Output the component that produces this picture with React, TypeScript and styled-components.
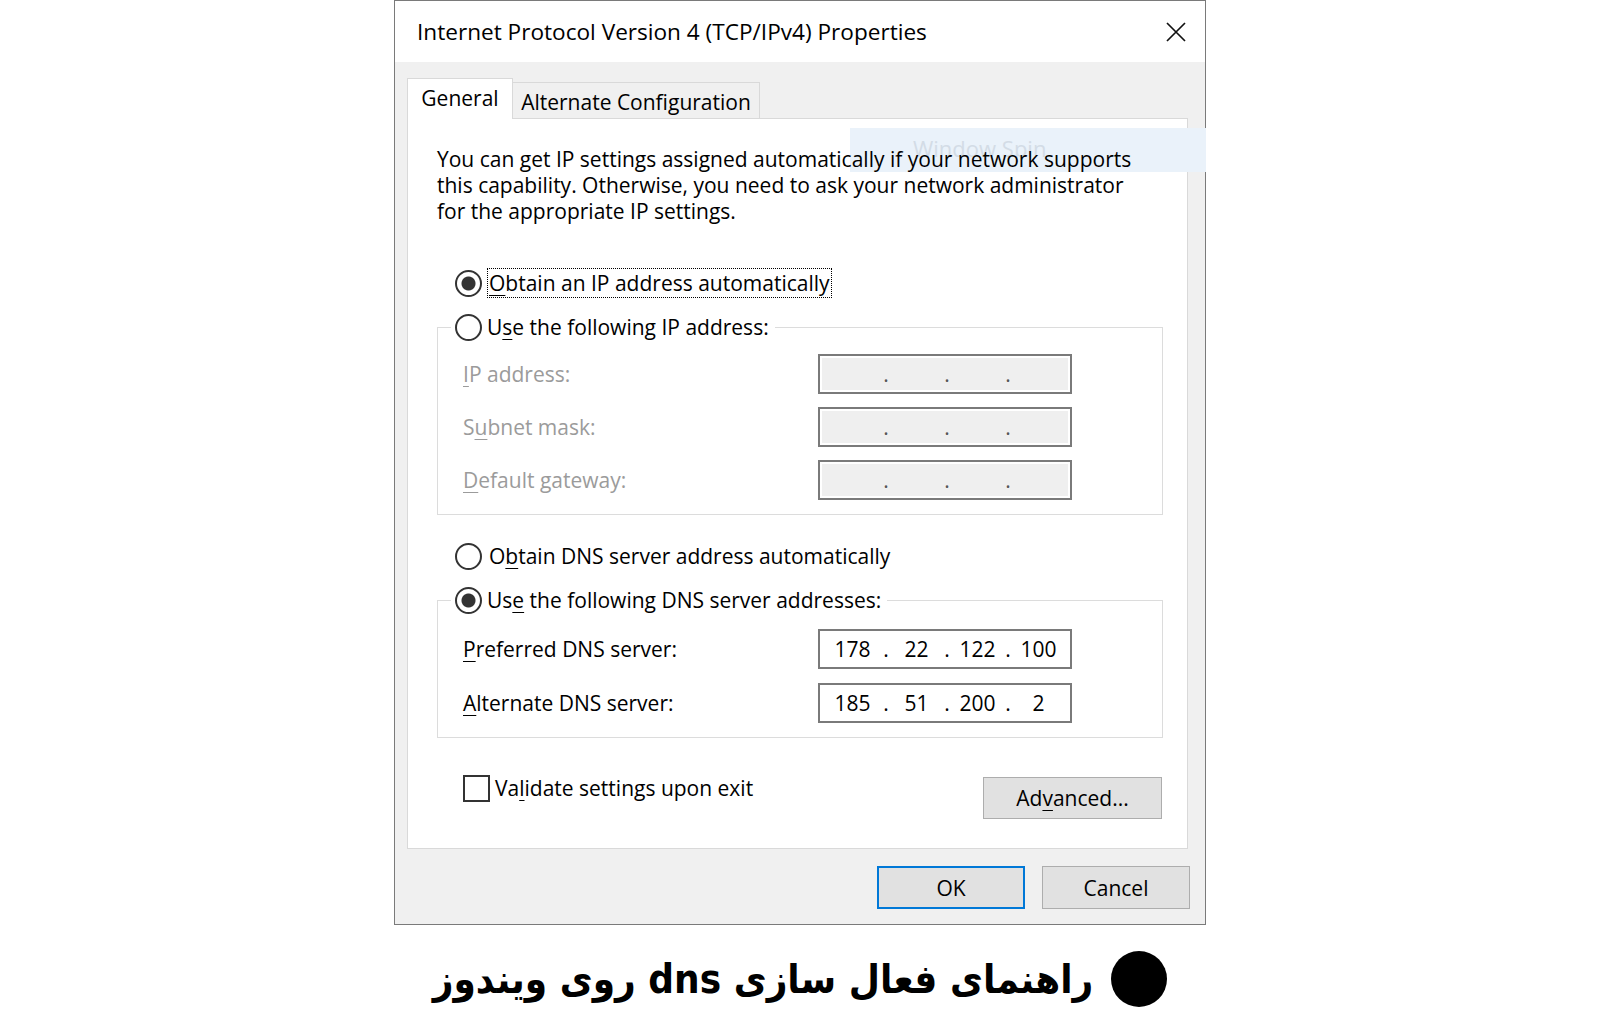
import React from 'react';
import styled, { createGlobalStyle } from 'styled-components';

const GlobalStyle = createGlobalStyle`
  html, body {
    margin: 0;
    padding: 0;
    background: #fff;
  }
  body {
    font-family: "Open Sans", "Noto Sans", sans-serif;
    color: #000;
  }
  * {
    box-sizing: border-box;
  }
`;

const Page = styled.div`
  width: 1600px;
  height: 1035px;
  display: flex;
  flex-direction: column;
  align-items: center;
  overflow: hidden;
`;

const Dialog = styled.div`
  width: 812px;
  border: 1px solid #7a7a7a;
  background: #f0f0f0;
  display: flex;
  flex-direction: column;
`;

const TitleBar = styled.div`
  height: 61px;
  background: #fff;
  display: flex;
  align-items: center;
  justify-content: space-between;
  padding: 0 19px 0 22px;
`;

const Title = styled.div`
  font-size: 22.6px;
  line-height: 30px;
`;

const CloseButton = styled.div`
  width: 20px;
  height: 20px;
  display: flex;
`;

const Body = styled.div`
  padding: 16px 17px 15px 12px;
  display: flex;
  flex-direction: column;
`;

const TabStrip = styled.div`
  display: flex;
  align-items: flex-end;
  height: 40px;
`;

const Tab = styled.div<{ $active?: boolean; $width: number }>`
  position: relative;
  z-index: ${(p) => (p.$active ? 1 : 0)};
  width: ${(p) => p.$width}px;
  height: ${(p) => (p.$active ? 41 : 36)}px;
  margin-bottom: ${(p) => (p.$active ? -1 : 0)}px;
  padding-top: 4px;
  background: ${(p) => (p.$active ? '#fff' : '#f0f0f0')};
  border: 1px solid #d9d9d9;
  border-bottom: none;
  ${(p) => (!p.$active ? 'border-left: none;' : '')}
  text-align: center;
  font-size: 21px;
  line-height: 30px;
  white-space: nowrap;
`;

const Panel = styled.div`
  position: relative;
  background: #fff;
  border: 1px solid #d9d9d9;
  padding: 27px 24px 29px 29px;
  display: flex;
  flex-direction: column;
`;

const Watermark = styled.div`
  position: absolute;
  left: 442px;
  top: 9px;
  width: 356px;
  height: 44px;
  background: #eaf2fa;
  color: #d3dce6;
  font-size: 22px;
  line-height: 40px;
  padding-left: 63px;
  pointer-events: none;
`;

const Description = styled.p`
  position: relative;
  z-index: 1;
  margin: 0 0 44px;
  font-size: 21px;
  line-height: 26px;
`;

const OptionRow = styled.div<{ $top?: number }>`
  display: flex;
  align-items: center;
  height: 30px;
  gap: 5px;
  padding-left: 18px;
  margin-top: ${(p) => p.$top ?? 0}px;
  margin-bottom: 14px;
  font-size: 21px;
`;

const Radio = styled.span<{ $checked?: boolean }>`
  flex: none;
  width: 27px;
  height: 27px;
  border-radius: 50%;
  border: 2px solid #333;
  background: ${(p) =>
    p.$checked ? 'radial-gradient(circle, #333 0 6.5px, #fff 7.5px)' : '#fff'};
`;

const Checkbox = styled.span`
  flex: none;
  width: 27px;
  height: 27px;
  border: 2px solid #333;
  background: #fff;
`;

const Label = styled.span<{ $focused?: boolean }>`
  line-height: 28px;
  padding: 0 1px;
  white-space: nowrap;
  border: 1px ${(p) => (p.$focused ? 'dotted #000' : 'solid transparent')};
`;

const Key = styled.span`
  text-decoration: underline;
  text-underline-offset: 4px;
  text-decoration-thickness: 1px;
`;

const Group = styled.fieldset`
  margin: 0;
  padding: 0;
  min-width: 0;
  border: 1px solid #dcdcdc;
`;

const Legend = styled.legend`
  margin-left: 13px;
  padding: 0 6px 0 4px;
`;

const LegendInner = styled.span`
  display: flex;
  align-items: center;
  gap: 5px;
  height: 30px;
  font-size: 21px;
`;

const FieldGrid = styled.div<{ $top: number; $gap: number }>`
  display: grid;
  grid-template-columns: 355px 254px;
  row-gap: ${(p) => p.$gap}px;
  align-items: center;
  padding: ${(p) => p.$top}px 0 14px 25px;
`;

const FieldLabel = styled.span<{ $disabled?: boolean }>`
  font-size: 21px;
  color: ${(p) => (p.$disabled ? '#9b9b9b' : '#000')};
  white-space: nowrap;
`;

const IpBox = styled.div<{ $disabled?: boolean }>`
  width: 254px;
  height: 40px;
  border: 2px solid #7a7a7a;
  background: ${(p) => (p.$disabled ? '#efefef' : '#fff')};
  box-shadow: ${(p) => (p.$disabled ? 'inset 0 0 0 2px #fff' : 'none')};
  display: grid;
  grid-template-columns: 61px 6px 55px 6px 55px 6px 55px;
  align-items: center;
  padding-left: 2px;
  font-size: 21px;
  line-height: 30px;
`;

const Octet = styled.span`
  text-align: center;
`;

const Sep = styled.span<{ $disabled?: boolean }>`
  text-align: center;
  color: ${(p) => (p.$disabled ? '#555' : '#000')};
`;

const Footer = styled.div`
  display: flex;
  justify-content: space-between;
  align-items: flex-start;
  margin-top: 35px;
  padding: 0 1px 0 26px;
`;

const CheckRow = styled.div`
  display: flex;
  align-items: center;
  gap: 5px;
  height: 30px;
  font-size: 21px;
`;

const PushButton = styled.div<{ $width: number; $height: number; $primary?: boolean }>`
  width: ${(p) => p.$width}px;
  height: ${(p) => p.$height}px;
  background: #e1e1e1;
  border: ${(p) => (p.$primary ? '2px solid #0078d7' : '1px solid #adadad')};
  display: flex;
  align-items: center;
  justify-content: center;
  font-size: 21px;
`;

const AdvancedWrap = styled.div`
  margin-top: 4px;
`;

const ButtonRow = styled.div`
  display: flex;
  justify-content: flex-end;
  gap: 17px;
  margin: 17px -2px 0 0;
`;

const Caption = styled.div`
  display: flex;
  direction: rtl;
  align-items: center;
  gap: 18px;
  margin-top: 24px;
`;

const CaptionDot = styled.span`
  flex: none;
  width: 56px;
  height: 56px;
  border-radius: 50%;
  background: #000;
`;

const CaptionText = styled.span`
  font-family: "DejaVu Sans Condensed", "DejaVu Sans", sans-serif;
  font-stretch: condensed;
  font-weight: 700;
  font-size: 40px;
  line-height: 60px;
  color: #000;
  white-space: nowrap;
`;

const IpField: React.FC<{ parts?: string[]; disabled?: boolean }> = ({ parts = ['', '', '', ''], disabled }) => (
  <IpBox $disabled={disabled}>
    <Octet>{parts[0]}</Octet>
    <Sep $disabled={disabled}>.</Sep>
    <Octet>{parts[1]}</Octet>
    <Sep $disabled={disabled}>.</Sep>
    <Octet>{parts[2]}</Octet>
    <Sep $disabled={disabled}>.</Sep>
    <Octet>{parts[3]}</Octet>
  </IpBox>
);

const CloseIcon = () => (
  <svg width="20" height="20" viewBox="0 0 20 20">
    <path d="M1 1L19 19M19 1L1 19" stroke="#111" strokeWidth="1.7" fill="none" />
  </svg>
);

export default function App() {
  return (
    <Page>
      <GlobalStyle />
      <Dialog>
        <TitleBar>
          <Title>Internet Protocol Version 4 (TCP/IPv4) Properties</Title>
          <CloseButton>
            <CloseIcon />
          </CloseButton>
        </TitleBar>
        <Body>
          <TabStrip>
            <Tab $active $width={106}>General</Tab>
            <Tab $width={247}>Alternate Configuration</Tab>
          </TabStrip>
          <Panel>
            <Watermark>Window Spin</Watermark>
            <Description>
              You can get IP settings assigned automatically if your network supports
              <br />
              this capability. Otherwise, you need to ask your network administrator
              <br />
              for the appropriate IP settings.
            </Description>

            <OptionRow>
              <Radio $checked />
              <Label $focused>
                <Key>O</Key>btain an IP address automatically
              </Label>
            </OptionRow>

            <Group>
              <Legend>
                <LegendInner>
                  <Radio />
                  <span>
                    U<Key>s</Key>e the following IP address:
                  </span>
                </LegendInner>
              </Legend>
              <FieldGrid $top={12} $gap={13}>
                <FieldLabel $disabled>
                  <Key>I</Key>P address:
                </FieldLabel>
                <IpField disabled />
                <FieldLabel $disabled>
                  S<Key>u</Key>bnet mask:
                </FieldLabel>
                <IpField disabled />
                <FieldLabel $disabled>
                  <Key>D</Key>efault gateway:
                </FieldLabel>
                <IpField disabled />
              </FieldGrid>
            </Group>

            <OptionRow $top={26}>
              <Radio />
              <Label>
                O<Key>b</Key>tain DNS server address automatically
              </Label>
            </OptionRow>

            <Group>
              <Legend>
                <LegendInner>
                  <Radio $checked />
                  <span>
                    Us<Key>e</Key> the following DNS server addresses:
                  </span>
                </LegendInner>
              </Legend>
              <FieldGrid $top={14} $gap={14}>
                <FieldLabel>
                  <Key>P</Key>referred DNS server:
                </FieldLabel>
                <IpField parts={['178', '22', '122', '100']} />
                <FieldLabel>
                  <Key>A</Key>lternate DNS server:
                </FieldLabel>
                <IpField parts={['185', '51', '200', '2']} />
              </FieldGrid>
            </Group>

            <Footer>
              <CheckRow>
                <Checkbox />
                <span>
                  Va<Key>l</Key>idate settings upon exit
                </span>
              </CheckRow>
              <AdvancedWrap>
                <PushButton $width={179} $height={42}>
                  Ad<Key>v</Key>anced...
                </PushButton>
              </AdvancedWrap>
            </Footer>
          </Panel>
          <ButtonRow>
            <PushButton $width={148} $height={43} $primary>
              OK
            </PushButton>
            <PushButton $width={148} $height={43}>
              Cancel
            </PushButton>
          </ButtonRow>
        </Body>
      </Dialog>
      <Caption>
        <CaptionDot />
        <CaptionText>راهنمای فعال سازی dns روی ویندوز</CaptionText>
      </Caption>
    </Page>
  );
}
